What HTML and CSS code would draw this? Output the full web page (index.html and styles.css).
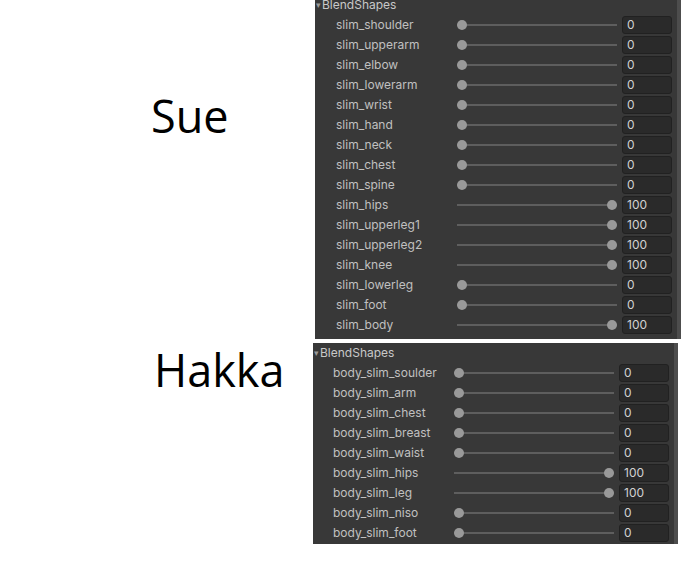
FILE: index.html
```html
<!DOCTYPE html>
<html>
<head>
<meta charset="utf-8">
<link rel="stylesheet" href="styles.css">
</head>
<body>
<div class="page">
  <section class="group group-sue">
    <div class="caption caption-sue">Sue</div>
    <div class="panel panel-sue">
      <div class="header"><span class="tri">▾</span>BlendShapes</div>
      <div class="row"><span class="name">slim_shoulder</span><span class="slider"><span class="track"></span><span class="knob" style="--v:0"></span></span><span class="field">0</span></div>
      <div class="row"><span class="name">slim_upperarm</span><span class="slider"><span class="track"></span><span class="knob" style="--v:0"></span></span><span class="field">0</span></div>
      <div class="row"><span class="name">slim_elbow</span><span class="slider"><span class="track"></span><span class="knob" style="--v:0"></span></span><span class="field">0</span></div>
      <div class="row"><span class="name">slim_lowerarm</span><span class="slider"><span class="track"></span><span class="knob" style="--v:0"></span></span><span class="field">0</span></div>
      <div class="row"><span class="name">slim_wrist</span><span class="slider"><span class="track"></span><span class="knob" style="--v:0"></span></span><span class="field">0</span></div>
      <div class="row"><span class="name">slim_hand</span><span class="slider"><span class="track"></span><span class="knob" style="--v:0"></span></span><span class="field">0</span></div>
      <div class="row"><span class="name">slim_neck</span><span class="slider"><span class="track"></span><span class="knob" style="--v:0"></span></span><span class="field">0</span></div>
      <div class="row"><span class="name">slim_chest</span><span class="slider"><span class="track"></span><span class="knob" style="--v:0"></span></span><span class="field">0</span></div>
      <div class="row"><span class="name">slim_spine</span><span class="slider"><span class="track"></span><span class="knob" style="--v:0"></span></span><span class="field">0</span></div>
      <div class="row"><span class="name">slim_hips</span><span class="slider"><span class="track"></span><span class="knob" style="--v:100"></span></span><span class="field">100</span></div>
      <div class="row"><span class="name">slim_upperleg1</span><span class="slider"><span class="track"></span><span class="knob" style="--v:100"></span></span><span class="field">100</span></div>
      <div class="row"><span class="name">slim_upperleg2</span><span class="slider"><span class="track"></span><span class="knob" style="--v:100"></span></span><span class="field">100</span></div>
      <div class="row"><span class="name">slim_knee</span><span class="slider"><span class="track"></span><span class="knob" style="--v:100"></span></span><span class="field">100</span></div>
      <div class="row"><span class="name">slim_lowerleg</span><span class="slider"><span class="track"></span><span class="knob" style="--v:0"></span></span><span class="field">0</span></div>
      <div class="row"><span class="name">slim_foot</span><span class="slider"><span class="track"></span><span class="knob" style="--v:0"></span></span><span class="field">0</span></div>
      <div class="row"><span class="name">slim_body</span><span class="slider"><span class="track"></span><span class="knob" style="--v:100"></span></span><span class="field">100</span></div>
    </div>
  </section>
  <section class="group group-hakka">
    <div class="caption caption-hakka">Hakka</div>
    <div class="panel panel-hakka">
      <div class="header"><span class="tri">▾</span>BlendShapes</div>
      <div class="row"><span class="name">body_slim_soulder</span><span class="slider"><span class="track"></span><span class="knob" style="--v:0"></span></span><span class="field">0</span></div>
      <div class="row"><span class="name">body_slim_arm</span><span class="slider"><span class="track"></span><span class="knob" style="--v:0"></span></span><span class="field">0</span></div>
      <div class="row"><span class="name">body_slim_chest</span><span class="slider"><span class="track"></span><span class="knob" style="--v:0"></span></span><span class="field">0</span></div>
      <div class="row"><span class="name">body_slim_breast</span><span class="slider"><span class="track"></span><span class="knob" style="--v:0"></span></span><span class="field">0</span></div>
      <div class="row"><span class="name">body_slim_waist</span><span class="slider"><span class="track"></span><span class="knob" style="--v:0"></span></span><span class="field">0</span></div>
      <div class="row"><span class="name">body_slim_hips</span><span class="slider"><span class="track"></span><span class="knob" style="--v:100"></span></span><span class="field">100</span></div>
      <div class="row"><span class="name">body_slim_leg</span><span class="slider"><span class="track"></span><span class="knob" style="--v:100"></span></span><span class="field">100</span></div>
      <div class="row"><span class="name">body_slim_niso</span><span class="slider"><span class="track"></span><span class="knob" style="--v:0"></span></span><span class="field">0</span></div>
      <div class="row"><span class="name">body_slim_foot</span><span class="slider"><span class="track"></span><span class="knob" style="--v:0"></span></span><span class="field">0</span></div>
    </div>
  </section>
</div>
</body>
</html>
```
FILE: styles.css
```css
html, body {
  margin: 0;
  padding: 0;
  background: #ffffff;
}
body {
  font-family: Inter, "Liberation Sans", sans-serif;
}
.page {
  display: flex;
  flex-direction: column;
  gap: 4px;
}
.group {
  display: flex;
  align-items: flex-start;
}
.caption {
  font-family: "Open Sans", "Noto Sans", sans-serif;
  font-size: 45px;
  line-height: 60px;
  color: #000;
  box-sizing: border-box;
}
.caption-sue {
  width: 315px;
  padding-left: 151px;
  margin-top: 86px;
}
.caption-hakka {
  width: 313px;
  padding-left: 154px;
  margin-top: -3px;
}
.panel {
  background: #383838;
  box-sizing: border-box;
  border-right: 4px solid #4d4d4d;
  overflow: hidden;
  color: #c0c0c0;
  font-size: 12px;
}
.panel-sue {
  width: 366px;
  height: 339px;
}
.panel-hakka {
  width: 365px;
  height: 201px;
}
.header {
  height: 20px;
  line-height: 20px;
  padding-left: 1px;
  display: flex;
  align-items: center;
  color: #c8c8c8;
}
.panel-sue .header {
  margin-top: -5px;
}
.panel-hakka .header {
  margin-top: 0;
}
.tri {
  font-size: 9px;
  width: 5px;
  overflow: hidden;
  color: #9a9a9a;
  margin-right: 1px;
}
.row {
  height: 20px;
  display: flex;
  align-items: center;
  padding-left: 21px;
}
.panel-hakka .row {
  padding-left: 20px;
}
.name {
  width: 121px;
  flex: none;
  white-space: nowrap;
  line-height: 20px;
}
.slider {
  position: relative;
  width: 160px;
  height: 10px;
  flex: none;
  display: flex;
  align-items: center;
}
.track {
  display: block;
  width: 100%;
  height: 2px;
  background: #5e5e5e;
}
.knob {
  position: absolute;
  top: 0;
  left: calc(var(--v) * 1.5px);
  width: 10px;
  height: 10px;
  border-radius: 50%;
  background: #999999;
}
.field {
  margin-left: 5px;
  width: 50px;
  height: 18px;
  box-sizing: border-box;
  flex: none;
  background: #2a2a2a;
  border: 1px solid #212121;
  border-radius: 3px;
  padding-left: 4px;
  line-height: 16px;
  color: #d2d2d2;
}
```
